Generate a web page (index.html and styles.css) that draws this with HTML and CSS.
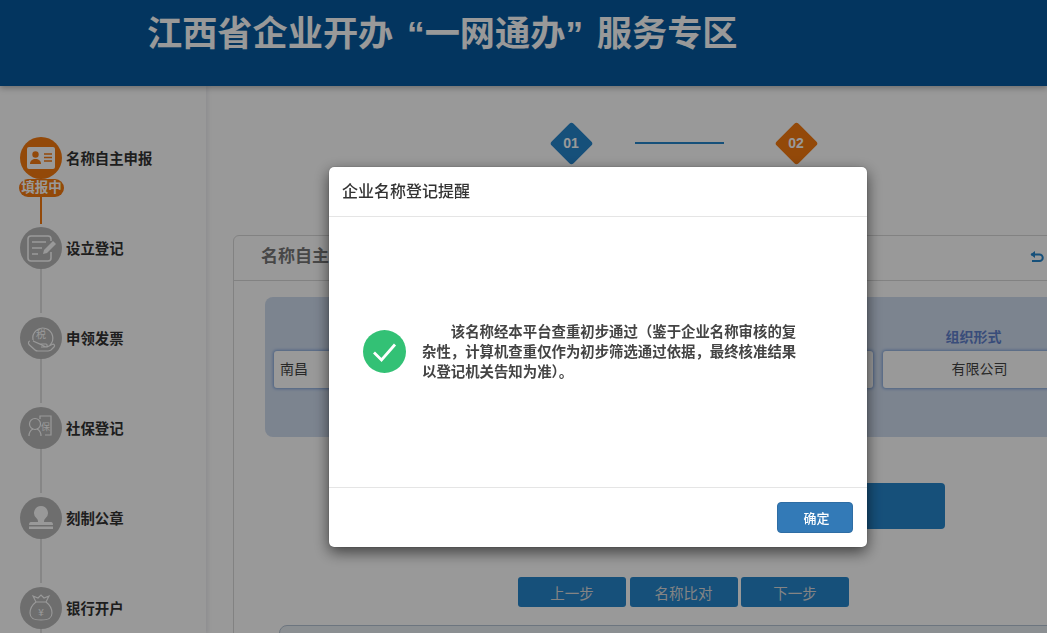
FILE: index.html
```html
<!DOCTYPE html>
<html lang="zh-CN">
<head>
    <meta charset="UTF-8">
    <title>江西省企业开办“一网通办”服务专区</title>
    <link rel="stylesheet" href="styles.css">
</head>
<body>
    <header class="top-bar">
        <h1 class="site-title">江西省企业开办 “一网通办” 服务专区</h1>
    </header>
    <div class="page">
        <aside class="side-nav">
            <div class="step">
                <div class="step-row">
                    <span class="step-icon step-icon-active">
                        <svg viewBox="0 0 42 42" width="42" height="42">
                            <rect x="7" y="10" width="28" height="22" rx="2" fill="#fff"/>
                            <circle cx="15.500" cy="17.500" r="3.200" fill="#f57a10"/>
                            <path d="M10 27c0-3.500 2.500-5 5.500-5s5.500 1.500 5.500 5z" fill="#f57a10"/>
                            <path d="M24 17h8M24 20.500h8M24 24h8" stroke="#f57a10" stroke-width="1.400"/>
                        </svg>
                    </span>
                    <span class="step-name">名称自主申报</span>
                </div>
                <span class="step-badge">填报中</span>
                <span class="step-line step-line-active"></span>
            </div>
            <div class="step">
                <div class="step-row">
                    <span class="step-icon">
                        <svg viewBox="0 0 42 42" width="42" height="42" fill="none" stroke="#fff" stroke-width="1.600">
                            <path d="M31 14v-2a3 3 0 0 0-3-3H11a3 3 0 0 0-3 3v19a3 3 0 0 0 3 3h17a3 3 0 0 0 3-3v-6"/>
                            <path d="M12 15h14M12 21h10M12 27h6"/>
                            <path d="M23 27l1-4 9-9 3 3-9 9z" fill="#fff" stroke="none"/>
                        </svg>
                    </span>
                    <span class="step-name">设立登记</span>
                </div>
                <span class="step-line"></span>
            </div>
            <div class="step">
                <div class="step-row">
                    <span class="step-icon">
                        <svg viewBox="0 0 42 42" width="42" height="42" fill="none" stroke="#fff" stroke-width="1.200">
                            <path d="M13 23a10 10 0 1 1 17 5"/>
                            <path d="M10 24c-1.500 0-2 2-1 3.500l6 5.500c1 1 2 1 3 1h10c1 0 2-.5 3-1l3-3c1.500-1.500 0-3.500-2-2.500l-5 2.500h-6m5 0c1.500 0 1.500-3 0-3h-6l-7-3z"/>
                            <text class="icon-text" x="21" y="21" text-anchor="middle" font-size="10">税</text>
                        </svg>
                    </span>
                    <span class="step-name">申领发票</span>
                </div>
                <span class="step-line"></span>
            </div>
            <div class="step">
                <div class="step-row">
                    <span class="step-icon">
                        <svg viewBox="0 0 42 42" width="42" height="42" fill="none" stroke="#fff" stroke-width="1.200">
                            <path d="M20 12V9h11v19h-6"/>
                            <circle cx="15" cy="17" r="5.500"/>
                            <path d="M9 29c0-4 2-6 4-7M21 29c0-4-2-6-4-7"/>
                            <text class="icon-text" x="25.500" y="23" text-anchor="middle" font-size="9">保</text>
                        </svg>
                    </span>
                    <span class="step-name">社保登记</span>
                </div>
                <span class="step-line"></span>
            </div>
            <div class="step">
                <div class="step-row">
                    <span class="step-icon">
                        <svg viewBox="0 0 42 42" width="42" height="42" fill="#fff">
                            <path d="M21 9a7 7 0 0 1 4.500 12.300c-1 1-1.500 2-1.500 3.700h6c2 0 3 .5 3 3H9c0-2.500 1-3 3-3h6c0-1.700-.5-2.700-1.500-3.700A7 7 0 0 1 21 9z"/>
                            <rect x="9" y="29.500" width="24" height="2.500"/>
                        </svg>
                    </span>
                    <span class="step-name">刻制公章</span>
                </div>
                <span class="step-line"></span>
            </div>
            <div class="step">
                <div class="step-row">
                    <span class="step-icon">
                        <svg viewBox="0 0 42 42" width="42" height="42" fill="none" stroke="#fff" stroke-width="1.100">
                            <path d="M13 9l5 2 3-3 3 3 5-2-3 6h-10z"/>
                            <path d="M16 15c-4 3-6 7-6 11 0 5 3 7 11 7s11-2 11-7c0-4-2-8-6-11"/>
                            <text class="icon-text" x="21" y="29" text-anchor="middle" font-size="10">¥</text>
                        </svg>
                    </span>
                    <span class="step-name">银行开户</span>
                </div>
                <span class="step-line"></span>
            </div>
        </aside>
        <main class="content">
            <div class="stepper">
                <span class="diamond"><b>01</b></span>
                <span class="stepper-line"></span>
                <span class="diamond diamond-orange"><b>02</b></span>
            </div>
            <section class="panel">
                <div class="panel-head">
                    <span class="panel-title">名称自主</span>
                    <svg class="back-icon" viewBox="0 0 14 12" width="14" height="12" fill="none" stroke="#2585cc" stroke-width="2">
                        <path d="M1 3.500h8.500a3 3 0 0 1 0 6.500H2"/>
                        <path d="M5 0L.5 3.500 5 7z" fill="#2585cc" stroke="none"/>
                    </svg>
                </div>
                <div class="name-box">
                    <div class="name-field">
                        <div class="field-input field-left">南昌</div>
                    </div>
                    <div class="name-field">
                        <div class="field-input"></div>
                    </div>
                    <div class="name-field">
                        <div class="field-input"></div>
                    </div>
                    <div class="name-field">
                        <label class="field-label">组织形式</label>
                        <div class="field-input">有限公司</div>
                    </div>
                </div>
                <div class="check-btn"></div>
                <div class="btn-row">
                    <button class="step-btn">上一步</button>
                    <button class="step-btn">名称比对</button>
                    <button class="step-btn">下一步</button>
                </div>
                <div class="lower-box"></div>
            </section>
        </main>
    </div>

    <div class="backdrop">
        <div class="modal">
            <div class="modal-head">企业名称登记提醒</div>
            <div class="modal-body">
                <svg class="ok-icon" viewBox="0 0 43 43" width="43" height="43">
                    <circle cx="21.500" cy="21.500" r="21.500" fill="#33c175"/>
                    <path d="M11 22.500l7.500 7.500L32 14.500" fill="none" stroke="#fff" stroke-width="2.800"/>
                </svg>
                <p class="modal-text">该名称经本平台查重初步通过（鉴于企业名称审核的复杂性，计算机查重仅作为初步筛选通过依据，最终核准结果以登记机关告知为准）。</p>
            </div>
            <div class="modal-foot">
                <button class="ok-btn">确定</button>
            </div>
        </div>
    </div>
</body>
</html>
```

FILE: styles.css
```css
body{
    margin: 0;
    height: 633px;
    overflow: hidden;
    background-color: #fff;
    font-family: "Liberation Sans", "Noto Sans CJK SC", sans-serif;
}
.top-bar{
    height: 86px;
    padding: 9px 0 0 147px;
    box-sizing: border-box;
    background-color: #05599e;
    position: relative;
    box-shadow: 0 2px 6px rgba(0,0,0,.3);
}
.site-title{
    margin: 0;
    font-size: 35.200px;
    word-spacing: 4px;
    line-height: 50px;
    font-weight: bold;
    color: #fff;
}
.page{
    display: flex;
    height: 547px;
    overflow: hidden;
}
.side-nav{
    width: 206px;
    flex: none;
    padding: 51px 0 0 20px;
    box-sizing: border-box;
    box-shadow: 2px 0 4px rgba(90,90,130,.12);
}
.step{
    display: flex;
    flex-direction: column;
    height: 90px;
}
.step-row{
    display: flex;
    align-items: center;
    gap: 4px;
}
.step-icon{
    width: 42px;
    height: 42px;
    flex: none;
    border-radius: 50%;
    background-color: #b8b8b8;
}
.step-icon svg{
    display: block;
}
.icon-text{
    fill: #fff;
    stroke: none;
    font-family: "Noto Sans CJK SC", sans-serif;
}
.step-icon-active{
    background-color: #f57a10;
}
.step-name{
    margin-bottom: 2px;
    font-size: 14.400px;
    font-weight: bold;
    color: #333;
}
.step-badge{
    width: 45px;
    height: 18px;
    margin-left: -1px;
    border-radius: 9px;
    background-color: #f57a10;
    color: #fff;
    font-size: 13.500px;
    font-weight: bold;
    line-height: 18px;
    text-align: center;
    white-space: nowrap;
}
.step-line{
    width: 2px;
    height: 44px;
    margin: 0 0 4px 20px;
    background-color: #e0e0e0;
}
.step-line-active{
    height: 27px;
    margin-bottom: 3px;
    background-color: #f57a10;
}
.content{
    flex: 1;
    min-width: 0;
    overflow: hidden;
}
.stepper{
    display: flex;
    align-items: center;
    height: 149px;
    padding: 0 0 35px 343px;
    box-sizing: border-box;
}
.diamond{
    width: 44px;
    height: 44px;
    flex: none;
    display: flex;
    align-items: center;
    justify-content: center;
    position: relative;
    color: #fff;
    font-size: 14px;
}
.diamond::before{
    content: "";
    width: 31px;
    height: 31px;
    position: absolute;
    border-radius: 3px;
    background-color: #2585cc;
    transform: rotate(45deg);
}
.diamond b{
    position: relative;
}
.diamond-orange::before{
    background-color: #f57a10;
}
.stepper-line{
    width: 89px;
    height: 2px;
    margin: 0 50px 0 42px;
    background-color: #2585cc;
}
.panel{
    width: 860px;
    margin-left: 27px;
    border: 1px solid #d9d9d9;
    border-radius: 6px 0 0 0;
    box-sizing: border-box;
}
.panel-head{
    display: flex;
    align-items: center;
    justify-content: space-between;
    height: 44px;
    padding: 0 48px 0 27px;
    border-bottom: 1px solid #d9d9d9;
}
.panel-title{
    margin-bottom: 7px;
    font-size: 17px;
    font-weight: bold;
    color: #777;
}
.back-icon{
    margin-bottom: 2px;
}
.name-box{
    display: grid;
    grid-template-columns: repeat(4, 193px);
    gap: 10px;
    align-items: end;
    height: 140px;
    margin: 16px 6px 0 31px;
    padding: 30px 9px 49px;
    box-sizing: border-box;
    border-radius: 8px;
    background-color: #cfdcef;
}
.field-label{
    display: block;
    margin-bottom: 4px;
    font-size: 14px;
    font-weight: bold;
    line-height: 20px;
    text-align: center;
    color: #5f80cc;
    padding-right: 12px;
}
.field-input{
    height: 37px;
    border-radius: 3px;
    box-shadow: 0 0 3px 1px #7fa3dc;
    background-color: #fff;
    font-size: 14px;
    line-height: 37px;
    text-align: center;
    color: #444;
}
.field-left{
    padding-left: 6px;
    text-align: left;
}
.check-btn{
    width: 295px;
    height: 46px;
    margin: 46px 0 0 416px;
    border-radius: 4px;
    background-color: #2585cc;
}
.btn-row{
    display: flex;
    gap: 3.500px;
    margin: 48px 0 0 284px;
}
.step-btn{
    width: 108px;
    height: 30px;
    padding: 0;
    border: none;
    border-radius: 3px;
    background-color: #2585cc;
    color: #ddd;
    font-family: inherit;
    font-size: 14.500px;
}
.lower-box{
    height: 100px;
    margin: 18px 0 0 45px;
    border: 1px solid #b5c4d4;
    border-radius: 8px 0 0 0;
    background-color: #e8eef3;
}
.backdrop{
    position: fixed;
    top: 0;
    left: 0;
    right: 0;
    bottom: 0;
    background-color: rgba(0,0,0,.4);
}
.modal{
    position: absolute;
    top: 167px;
    left: 329px;
    width: 538px;
    height: 380px;
    display: flex;
    flex-direction: column;
    border-radius: 5px;
    background-color: #fff;
    box-shadow: 0 0 1px rgba(0,0,0,.6), 0 5px 15px rgba(0,0,0,.6);
}
.modal-head{
    height: 49px;
    padding-left: 13px;
    border-bottom: 1px solid #e5e5e5;
    font-size: 16px;
    font-weight: 500;
    line-height: 49px;
    color: #333;
}
.modal-body{
    flex: 1;
    display: flex;
    align-items: center;
    gap: 16px;
    padding-left: 34px;
    border-bottom: 1px solid #e5e5e5;
}
.ok-icon{
    flex: none;
    margin-top: -2px;
}
.modal-text{
    width: 378px;
    margin: 0;
    font-size: 14.400px;
    font-weight: bold;
    line-height: 20px;
    text-indent: 2em;
    color: #444;
}
.modal-foot{
    display: flex;
    justify-content: flex-end;
    height: 59px;
    padding: 14px 14px 0 0;
    box-sizing: border-box;
}
.ok-btn{
    width: 76px;
    height: 31px;
    padding: 0 0 0 3px;
    border: 1px solid #2e6da4;
    border-radius: 4px;
    background-color: #337ab7;
    color: #fff;
    font-family: inherit;
    font-size: 13px;
    font-weight: 500;
}
```
